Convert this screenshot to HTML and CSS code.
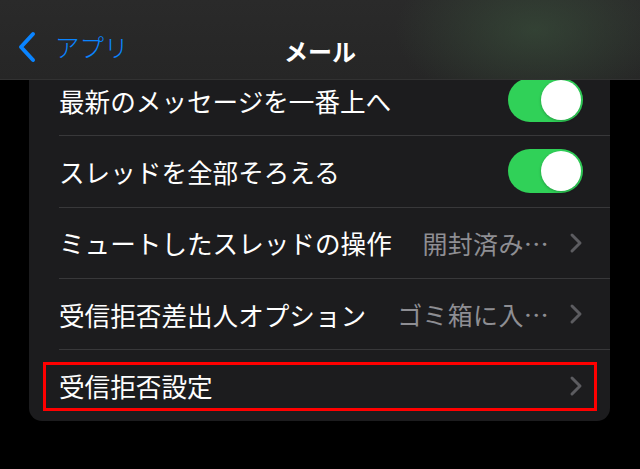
FILE: index.html
```html
<!DOCTYPE html>
<html lang="ja">

<head>
    <meta charset="UTF-8">
    <meta name="viewport" content="width=device-width, initial-scale=1.0">
    <title>メール</title>
    <link rel="stylesheet" href="styles.css">
</head>

<body>
    <header class="navbar">
        <a class="back" href="#">
            <svg class="back-icon" width="20" height="32" viewBox="0 0 20 32">
                <path d="M16 3 L4 16 L16 29" fill="none" stroke="#0a84ff" stroke-width="4" stroke-linecap="round" stroke-linejoin="round" />
            </svg>
            <span>アプリ</span>
        </a>
        <h1 class="title">メール</h1>
    </header>

    <main class="content">
        <div class="card">
            <div class="row">
                <span class="label">最新のメッセージを一番上へ</span>
                <span class="toggle on"><span class="knob"></span></span>
            </div>
            <div class="row">
                <span class="label">スレッドを全部そろえる</span>
                <span class="toggle on"><span class="knob"></span></span>
            </div>
            <div class="row">
                <span class="label">ミュートしたスレッドの操作</span>
                <span class="value">開封済み…</span>
                <svg class="chevron" width="14" height="22" viewBox="0 0 14 22">
                    <path d="M3 3 L11 11 L3 19" fill="none" stroke="#5c5c60" stroke-width="3" stroke-linecap="round" stroke-linejoin="round" />
                </svg>
            </div>
            <div class="row">
                <span class="label">受信拒否差出人オプション</span>
                <span class="value">ゴミ箱に入…</span>
                <svg class="chevron" width="14" height="22" viewBox="0 0 14 22">
                    <path d="M3 3 L11 11 L3 19" fill="none" stroke="#5c5c60" stroke-width="3" stroke-linecap="round" stroke-linejoin="round" />
                </svg>
            </div>
            <div class="row highlighted">
                <span class="label">受信拒否設定</span>
                <svg class="chevron" width="14" height="22" viewBox="0 0 14 22">
                    <path d="M3 3 L11 11 L3 19" fill="none" stroke="#5c5c60" stroke-width="3" stroke-linecap="round" stroke-linejoin="round" />
                </svg>
            </div>
        </div>
    </main>
</body>

</html>
```

FILE: styles.css
```css
html,
body {
    margin: 0;
    height: 100%;
}

body {
    background-color: #000;
    color: #fff;
    font-family: "Noto Sans CJK JP", "Noto Sans", sans-serif;
    overflow: hidden;
    position: relative;
}

.navbar {
    position: absolute;
    top: 0;
    left: 0;
    right: 0;
    height: 79px;
    z-index: 2;
    display: flex;
    align-items: center;
    justify-content: center;
    background:
        radial-gradient(ellipse 140px 80px at 535px 30px, rgba(58, 82, 60, 0.6), rgba(58, 82, 60, 0) 100%),
        linear-gradient(to bottom, #2a2a2a, #262626);
    border-bottom: 1px solid #323232;
}

.back {
    position: absolute;
    left: 17px;
    top: 31px;
    display: flex;
    align-items: center;
    gap: 18px;
    color: #0a84ff;
    text-decoration: none;
    font-size: 24.5px;
    line-height: 32px;
    font-weight: 300;
}

.back-icon {
    display: block;
}

.title {
    margin: 0;
    margin-top: 21px;
    font-size: 24px;
    font-weight: 700;
}

.content {
    padding: 65px 30px 0 29px;
}

.card {
    background-color: #1c1c1e;
    border-radius: 13px;
    padding-left: 30px;
    overflow: hidden;
}

.row {
    position: relative;
    height: 71.3px;
    box-sizing: border-box;
    display: flex;
    align-items: center;
    padding-right: 28px;
    border-bottom: 1px solid #38383a;
}

.row:last-child {
    border-bottom: none;
}

.label {
    flex: 1;
    font-size: 25.6px;
    white-space: nowrap;
}

.value {
    color: #8e8e93;
    font-size: 25px;
    margin-right: 20px;
    letter-spacing: 0.3px;
    white-space: nowrap;
}

.chevron {
    display: block;
    margin-right: -1px;
}

.toggle {
    width: 75px;
    height: 44px;
    border-radius: 22px;
    background-color: #30d158;
    position: relative;
    margin-right: -1px;
}

.knob {
    position: absolute;
    top: 2px;
    right: 2px;
    width: 40px;
    height: 40px;
    border-radius: 50%;
    background-color: #fff;
    box-shadow: 0 1px 3px rgba(0, 0, 0, 0.25);
}

.highlighted::after {
    content: "";
    position: absolute;
    left: -16px;
    right: 13px;
    top: 12px;
    bottom: 10px;
    border: 3px solid #ff0000;
}
```
